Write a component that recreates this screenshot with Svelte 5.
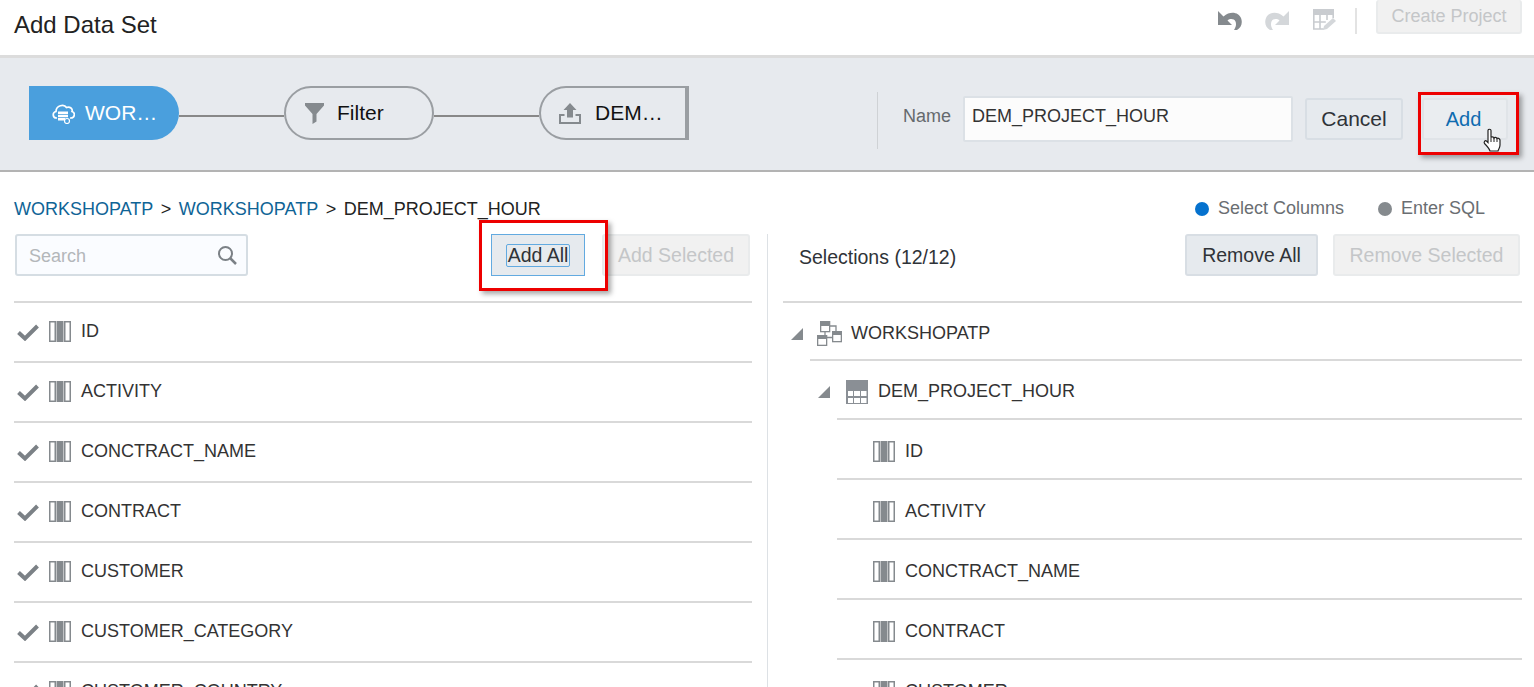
<script lang="ts">
const columns = ['ID', 'ACTIVITY', 'CONCTRACT_NAME', 'CONTRACT', 'CUSTOMER', 'CUSTOMER_CATEGORY', 'CUSTOMER_COUNTRY']
const selected = ['ID', 'ACTIVITY', 'CONCTRACT_NAME', 'CONTRACT', 'CUSTOMER']
const arrow = 'M0 0V14H14L9.500 9.500C12 7.500 16 7.500 17.500 10.500C18.500 13 18 16 16 19H19C23 16.500 25 12 23 7C21 2 13 -1 5.500 5.500Z'
</script>

{#snippet colIcon()}
  <svg class="col-icon" width="22" height="21" viewBox="0 0 22 21">
    <rect x="0.750" y="0.750" width="5.500" height="19.500" fill="#fff" stroke="#858a8e" stroke-width="1.500" />
    <rect x="7.500" y="0" width="7" height="21" fill="#858a8e" />
    <rect x="15.750" y="0.750" width="5.500" height="19.500" fill="#fff" stroke="#858a8e" stroke-width="1.500" />
  </svg>
{/snippet}

<div class="page">
  <header class="top">
    <h1>Add Data Set</h1>
    <div class="top-actions">
      <svg class="undo" width="24" height="19" viewBox="0 0 24 19"><path d={arrow} fill="#858a8e" /></svg>
      <svg class="undo" width="24" height="19" viewBox="0 0 24 19"><path d={arrow} fill="#d4d7da" transform="matrix(-1 0 0 1 24 0)" /></svg>
      <svg class="grid-edit" width="23" height="21" viewBox="0 0 23 21">
        <path d="M0 0h21v6H0z" fill="#c9ccd0" />
        <path d="M.8 6v14h10M7 6v14M14 6v5M20.200 6v3M.8 13h12" fill="none" stroke="#c9ccd0" stroke-width="1.600" />
        <path d="M11 17l9-8 3 3-9 8-4 1z" fill="#d4d7da" />
      </svg>
      <span class="vsep"></span>
      <button class="btn disabled create">Create Project</button>
    </div>
  </header>

  <section class="band">
    <div class="flow">
      <div class="node active">
        <svg width="23" height="21" viewBox="0 0 23 21" fill="none" stroke="#fff" stroke-width="1.700">
          <path d="M5 15H4.500C.5 15 0 9.500 4 8.500C4 2.500 12 .5 14.500 4.500C18 3 21 6 20 8.500C23.500 9.500 23 15 19 15H18" />
          <path d="M6 8.500h10v2.500H6zM6 11.700h10v2.500H6zM6 15h7v2.500H6z" fill="#fff" stroke="none" />
          <circle cx="15" cy="18" r="2.500" stroke-width="1.200" />
        </svg>
        <span>WOR…</span>
      </div>
      <span class="link"></span>
      <div class="node">
        <svg width="19" height="21" viewBox="0 0 19 21"><path d="M0 0H19V2.500L11.500 11V18.500L7.500 21V11L0 2.500Z" fill="#858a8e" /></svg>
        <span>Filter</span>
      </div>
      <span class="link"></span>
      <div class="node last">
        <svg width="22" height="21" viewBox="0 0 22 21" fill="#858a8e">
          <path d="M11 0l6.500 7h-3.500v7.500h-6V7H4.500Z" />
          <path d="M0 11h5.500v2H2V19h18V13h-3.500V11H22V21H0Z" />
        </svg>
        <span>DEM…</span>
      </div>
    </div>
    <div class="name-form">
      <label for="ds-name">Name</label>
      <input id="ds-name" value="DEM_PROJECT_HOUR" />
      <button class="btn cancel">Cancel</button>
      <button class="btn add">Add</button>
      <span class="callout add-callout"></span>
      <svg class="cursor" width="18" height="24" viewBox="0 0 18 24">
        <path d="M5 12V2.500C5 .8 8 .8 8 2.500V9.500C8.500 8.500 10.500 8.500 11 10C11.500 9 13.500 9 14 10.500C14.500 10 16.500 10 17 12V17C17 20 15.500 21 15 23H7C6 20 4 18 1.500 15.500C.5 14 2 12 3.500 13L5 14.500Z" fill="#fff" stroke="#222" stroke-width="1.200" />
        <path d="M8 9.500V14M11 10V14M14 10.500V14" stroke="#222" fill="none" />
      </svg>
    </div>
  </section>

  <section class="crumb-row">
    <nav class="crumbs">
      <a href="#a">WORKSHOPATP</a><span class="gt">&gt;</span><a href="#b">WORKSHOPATP</a><span class="gt">&gt;</span><span>DEM_PROJECT_HOUR</span>
    </nav>
    <div class="modes">
      <span class="mode"><i class="dot blue"></i>Select Columns</span>
      <span class="mode"><i class="dot"></i>Enter SQL</span>
    </div>
  </section>

  <main class="panes">
    <div class="pane left">
      <div class="toolbar">
        <div class="search">
          <span>Search</span>
          <svg width="20" height="20" viewBox="0 0 20 20" fill="none" stroke="#7b8186" stroke-width="2"><circle cx="8.500" cy="8.500" r="6.500" /><path d="M13 13l6 6" stroke-width="2.500" /></svg>
        </div>
        <div class="tool-btns">
          <button class="btn focus"><span>Add All</span></button>
          <span class="callout all-callout"></span>
          <button class="btn disabled">Add Selected</button>
        </div>
      </div>
      <ul class="list">
        {#each columns as name}
          <li>
            <svg class="check" width="22" height="17" viewBox="0 0 22 17"><path d="M1.500 8.500L8 14.500L20.500 2" fill="none" stroke="#7b8186" stroke-width="4" /></svg>
            {@render colIcon()}
            <span>{name}</span>
          </li>
        {/each}
      </ul>
    </div>

    <div class="pane right">
      <div class="toolbar">
        <span class="count">Selections (12/12)</span>
        <div class="tool-btns">
          <button class="btn">Remove All</button>
          <button class="btn disabled">Remove Selected</button>
        </div>
      </div>
      <div class="tree">
        <div class="tree-row lvl0">
          <i class="tri"></i>
          <svg width="25" height="25" viewBox="0 0 25 25" fill="#fff" stroke="#858a8e" stroke-width="1.300">
            <path d="M13 5h6v5M8 11v3M10 16.500h5" fill="none" />
            <rect x="3.650" y=".65" width="9" height="10" /><path d="M3 0h10v5H3z" fill="#858a8e" stroke="none" />
            <rect x="15.650" y="10.650" width="8.700" height="10" /><path d="M15 10h10v4H15z" fill="#858a8e" stroke="none" />
            <rect x=".65" y="14.650" width="9" height="9.700" /><path d="M0 14h10v4H0z" fill="#858a8e" stroke="none" />
          </svg>
          <span>WORKSHOPATP</span>
        </div>
        <div class="tree-row lvl1">
          <i class="tri"></i>
          <svg width="22" height="24" viewBox="0 0 22 24">
            <rect width="22" height="24" fill="#8a8f95" />
            <path d="M2 11h5v5H2zM8 11h6v5H8zM15 11h5.500v5H15zM2 18h5v5H2zM8 18h6v5H8zM15 18h5.500v5H15z" fill="#fff" />
          </svg>
          <span>DEM_PROJECT_HOUR</span>
        </div>
        {#each selected as name}
          <div class="tree-row lvl2">
            {@render colIcon()}
            <span>{name}</span>
          </div>
        {/each}
      </div>
    </div>
  </main>
</div>

<style>
  :global(body) {
    background: #fff;
  }

  .page {
    width: 1534px;
    height: 687px;
    overflow: hidden;
    font-family: "Liberation Sans", Arial, sans-serif;
    color: #2f3338;
    font-size: 18px;
  }

  .btn {
    font: inherit;
    height: 42px;
    padding: 0 15px;
    color: #2f3338;
    background: #e6eaee;
    border: 2px solid #d8dee4;
    border-radius: 3px;
    box-sizing: border-box;
  }

  .btn.disabled {
    color: #c4c6c8;
    background: #f1f1f1;
    border-color: #e9ebec;
  }

  /* top bar */
  .top {
    height: 55px;
    display: flex;
    justify-content: space-between;
    border-bottom: 3px solid #dcdcdc;
    box-sizing: content-box;
  }

  h1 {
    margin: 11px 0 0 14px;
    font-size: 24px;
    font-weight: 400;
    color: #222;
  }

  .top-actions {
    display: flex;
    align-items: flex-start;
    margin-right: 12px;
  }

  .undo {
    margin-top: 11px;
    margin-right: 23px;
  }

  .undo + .undo {
    margin-right: 24px;
  }

  .grid-edit {
    margin-top: 9px;
    margin-right: 19px;
  }

  .vsep {
    width: 2px;
    height: 26px;
    margin: 8px 19px 0 0;
    background: #e3e3e3;
  }

  .create {
    width: 146px;
    height: 34px;
    border-top: 0;
    padding: 0;
    color: #a9abad;
  }

  /* pipeline band */
  .band {
    height: 112px;
    display: flex;
    justify-content: space-between;
    align-items: center;
    background: #e7eaee;
    border-bottom: 2px solid #b3b3b3;
    box-sizing: content-box;
  }

  .flow {
    display: flex;
    align-items: center;
    margin-left: 29px;
    margin-top: -2px;
  }

  .node {
    width: 150px;
    height: 54px;
    box-sizing: border-box;
    display: flex;
    align-items: center;
    gap: 13px;
    padding-left: 19px;
    font-size: 21px;
    color: #111;
    border: 2px solid #9a9ea2;
    border-radius: 27px;
  }

  .node.active {
    padding-left: 23px;
    gap: 10px;
    color: #fff;
    background: #4a9fdd;
    border: 0;
    border-radius: 0 27px 27px 0;
  }

  .node.last {
    padding-left: 18px;
    gap: 14px;
    border-right-width: 4px;
    border-radius: 27px 0 0 27px;
  }

  .link {
    width: 105px;
    height: 2px;
    margin-top: 6px;
    background: #888;
  }

  .name-form {
    position: relative;
    display: flex;
    align-items: center;
    margin: 13px 26px 0 0;
    border-left: 1px solid #cfd2d5;
    height: 57px;
    box-sizing: border-box;
    padding: 0 0 3px 25px;
  }

  .name-form label {
    color: #65696d;
    margin: 0 12px 6px 0;
  }

  input {
    width: 330px;
    height: 46px;
    box-sizing: border-box;
    padding: 0 7px 6px;
    font: inherit;
    color: #333;
    background: #fcfcfc;
    border: 2px solid #dce1e6;
    border-radius: 2px;
    margin-right: 12px;
  }

  .cancel {
    width: 98px;
    font-size: 21px;
    padding: 0;
    margin-right: 19px;
  }

  .add {
    width: 86px;
    padding: 0 3px 0 0;
    font-size: 20px;
    color: #0f6cb0;
    background: #eaedf0;
    border-color: #e0e4e8;
  }

  .callout {
    position: absolute;
    border: 3px solid #ed0000;
    box-shadow: 3px 3px 5px rgba(0, 0, 0, .35);
    box-sizing: border-box;
    pointer-events: none;
  }

  .add-callout {
    left: 540px;
    top: 0;
    width: 101px;
    height: 63px;
  }

  .cursor {
    position: absolute;
    left: 605px;
    top: 36px;
  }

  /* breadcrumb */
  .crumb-row {
    height: 62px;
    display: flex;
    justify-content: space-between;
  }

  .crumbs {
    margin: 27px 0 0 14px;
    color: #222;
  }

  .crumbs a {
    color: #0f6496;
    text-decoration: none;
  }

  .gt {
    margin: 0 7.500px;
  }

  .modes {
    display: flex;
    gap: 34px;
    margin: 26px 49px 0 0;
    color: #6a6e72;
  }

  .mode {
    display: flex;
    align-items: center;
    height: 21px;
    gap: 9px;
  }

  .dot {
    width: 14px;
    height: 14px;
    border-radius: 50%;
    background: #858a8e;
  }

  .dot.blue {
    background: #0572ce;
  }

  /* panes */
  .panes {
    display: flex;
  }

  .pane {
    box-sizing: border-box;
  }

  .left {
    width: 768px;
    padding: 0 15px 0 14px;
    border-right: 1px solid #dde1e5;
  }

  .right {
    flex: 1;
    padding: 0 12px 0 15px;
  }

  .toolbar {
    height: 67px;
    display: flex;
    justify-content: space-between;
    align-items: flex-start;
    border-bottom: 2px solid #d9d9d9;
  }

  .search {
    width: 233px;
    height: 42px;
    margin-left: 1px;
    box-sizing: border-box;
    display: flex;
    justify-content: space-between;
    align-items: center;
    padding: 0 9px 0 12px;
    color: #b3b7ba;
    background: #fafcff;
    border: 2px solid #d5dde3;
    border-radius: 3px;
  }

  .search span {
    padding-top: 2px;
  }

  .tool-btns {
    position: relative;
    display: flex;
    gap: 15px;
    font-size: 19.500px;
  }

  .left .tool-btns {
    margin-right: 2px;
    gap: 17px;
  }

  .left .btn {
    padding: 0;
  }

  .left .btn.disabled {
    width: 148px;
  }

  .focus.btn {
    width: 94px;
    border: 1px solid #62aae0;
    border-radius: 0;
  }

  .focus span {
    display: inline-block;
    line-height: 21px;
    padding: 0 .5px;
    border: 1.500px solid #62aae0;
    border-radius: 2px;
  }

  .all-callout {
    left: -12px;
    top: -14px;
    width: 129px;
    height: 71px;
  }

  .right .btn {
    padding: 0;
    width: 133px;
  }

  .right .btn.disabled {
    width: 187px;
  }

  .right .tool-btns {
    margin-right: 2px;
  }

  .count {
    margin: 12px 0 0 16px;
    font-size: 19.500px;
  }

  .list {
    list-style: none;
    margin: 0;
    padding: 0;
  }

  .list li {
    height: 60px;
    display: flex;
    align-items: center;
    padding-bottom: 1px;
    box-sizing: border-box;
    border-bottom: 2px solid #d9d9d9;
    color: #333;
  }

  .check {
    margin: 2px 11px 0 3px;
  }

  .col-icon {
    margin-right: 10px;
  }

  .list .col-icon {
    margin-left: -1px;
  }

  .tree-row {
    position: relative;
    display: flex;
    align-items: center;
    box-sizing: border-box;
    color: #333;
  }

  .tri {
    width: 0;
    height: 0;
    border-style: solid;
    border-width: 0 0 12px 12px;
    border-color: transparent transparent #858a8e transparent;
  }

  .lvl0 {
    height: 58px;
    padding: 3px 0 0 8px;
  }

  .lvl0::after,
  .lvl1::after {
    content: "";
    position: absolute;
    right: 0;
    bottom: 0;
    height: 2px;
    background: #d9d9d9;
  }

  .lvl0::after {
    left: 27px;
  }

  .lvl0 .tri {
    margin-right: 14px;
  }

  .lvl0 svg {
    margin-right: 9px;
  }

  .lvl1 {
    height: 59px;
    padding: 2px 0 0 35px;
  }

  .lvl1::after {
    left: 54px;
  }

  .lvl1 .tri {
    margin-right: 16px;
  }

  .lvl1 svg {
    margin-right: 10px;
  }

  .lvl2 {
    height: 60px;
    margin-left: 54px;
    padding: 4px 0 0 36px;
    border-bottom: 2px solid #d9d9d9;
  }
</style>
